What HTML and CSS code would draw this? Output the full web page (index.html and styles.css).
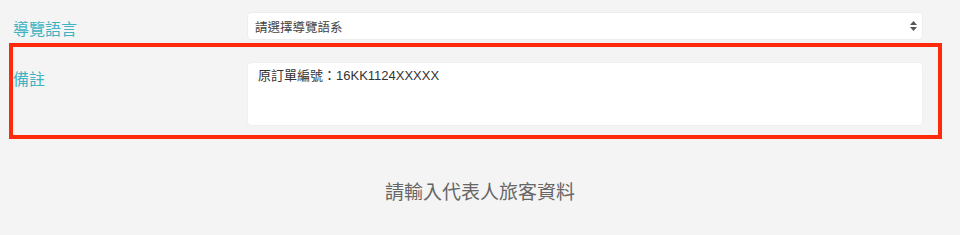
FILE: index.html
```html
<!DOCTYPE html>
<html lang="zh-Hant">
<head>
    <meta charset="UTF-8">
    <meta name="viewport" content="width=device-width, initial-scale=1.0">
    <title>訂單資料</title>
    <link rel="stylesheet" href="styles.css">
</head>
<body>
    <div class="form">
        <div class="row">
            <label class="label">導覽語言</label>
            <div class="select">
                <span>請選擇導覽語系</span>
                <svg class="arrows" width="7" height="10" viewBox="0 0 7 10">
                    <path d="M3.5 0 L7 4 L0 4 Z" fill="#555"/>
                    <path d="M0 6 L7 6 L3.5 10 Z" fill="#555"/>
                </svg>
            </div>
        </div>

        <div class="row highlight">
            <label class="label">備註</label>
            <div class="textarea">原訂單編號：16KK1124XXXXX</div>
        </div>

        <h2 class="section-title">請輸入代表人旅客資料</h2>
    </div>
</body>
</html>
```

FILE: styles.css
```css
body {
    font-family: "Liberation Sans", "Noto Sans CJK TC", sans-serif;
    margin: 0;
    background-color: #f4f4f4;
}
.form {
    padding-top: 12px;
}
.row {
    display: flex;
    margin-left: 13px;
    margin-right: 37px;
}
.label {
    width: 234px;
    flex-shrink: 0;
    padding-top: 8px;
    font-size: 16px;
    line-height: 20px;
    color: #3fb3c2;
}
.select {
    flex: 1;
    height: 28px;
    box-sizing: border-box;
    display: flex;
    align-items: center;
    justify-content: space-between;
    padding: 0 5px 0 7px;
    background-color: white;
    border: 1px solid #ededed;
    border-radius: 4px;
    font-size: 12.5px;
    color: #444;
}
.arrows {
    display: block;
}
.highlight {
    margin: 3px 18px 0 9px;
    border: 4px solid #ff2a0a;
    padding: 15px 15px 9px 0;
}
.highlight .label {
    padding-top: 8px;
}
.textarea {
    flex: 1;
    height: 64px;
    box-sizing: border-box;
    padding: 4px 10px;
    background-color: white;
    border: 1px solid #efefef;
    border-radius: 4px;
    font-size: 13px;
    line-height: 18px;
    color: #333;
}
.section-title {
    margin: 42px 0 0;
    text-align: center;
    font-size: 19px;
    line-height: 24px;
    font-weight: normal;
    color: #666;
}
```
